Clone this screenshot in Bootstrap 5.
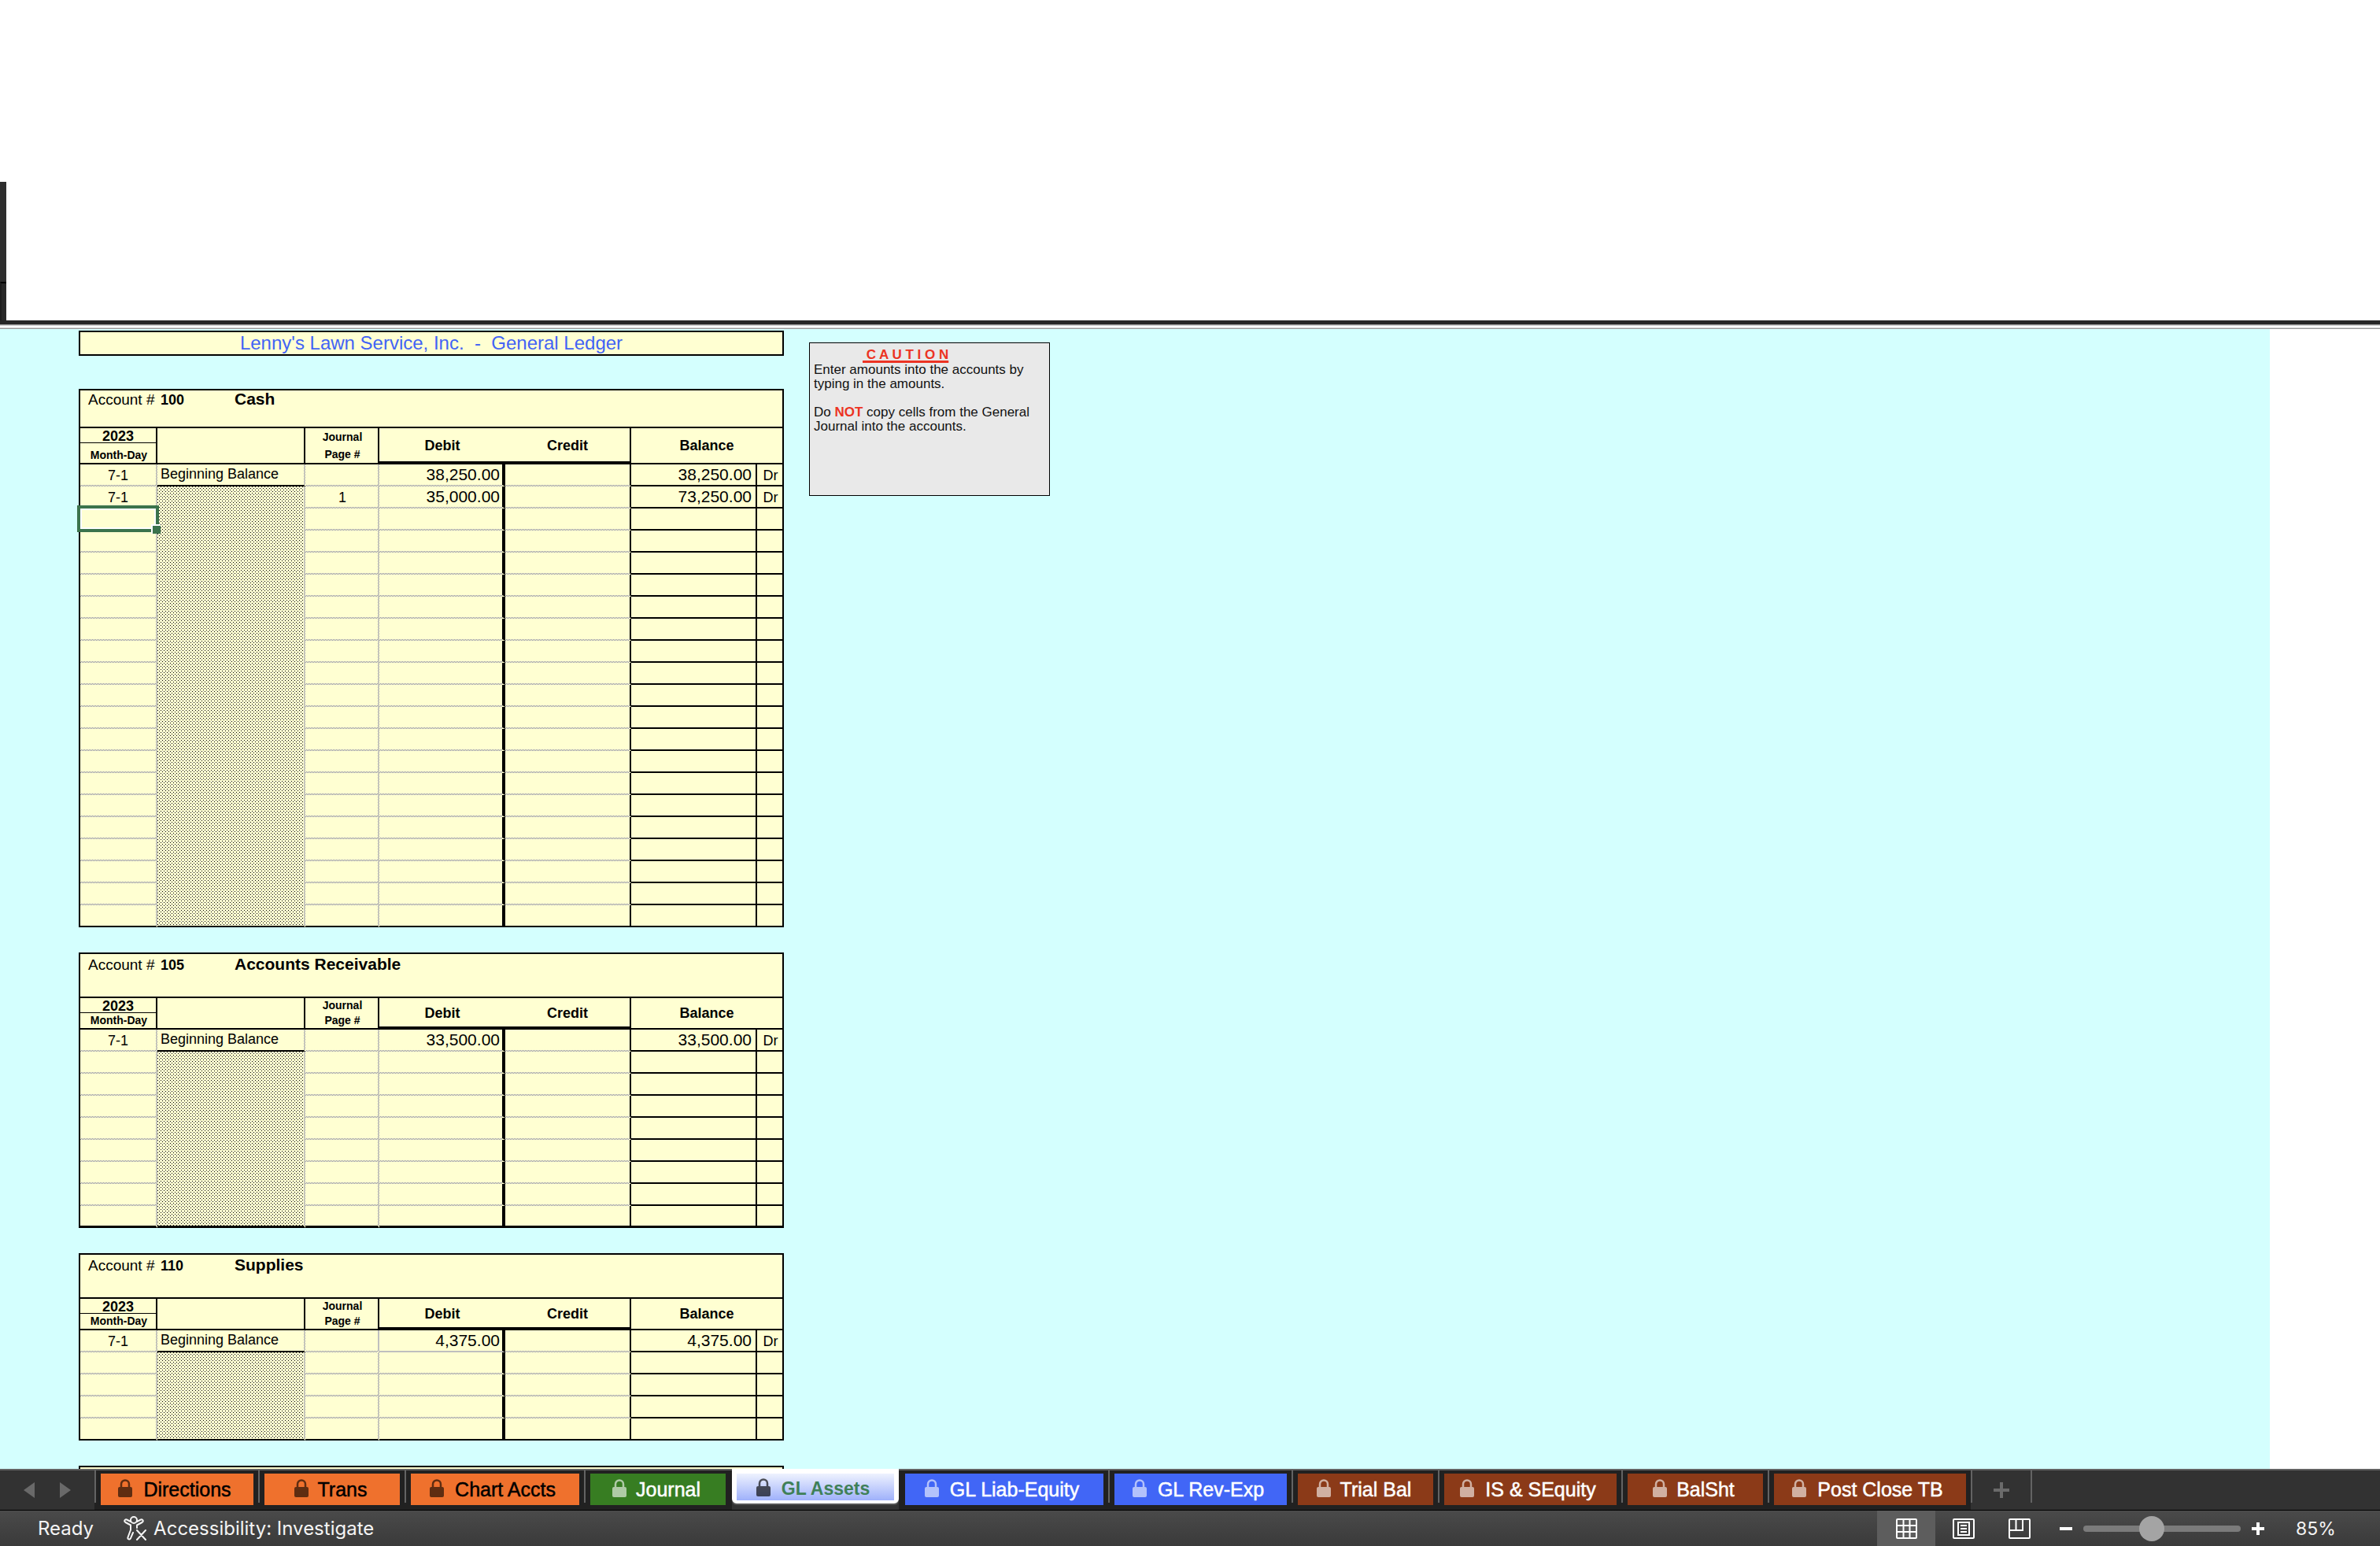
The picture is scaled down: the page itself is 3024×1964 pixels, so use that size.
<!DOCTYPE html>
<html lang="en">
<head>
<meta charset="utf-8">
<meta name="viewport" content="width=device-width, initial-scale=1">
<title>General Ledger</title>
<link href="https://cdn.jsdelivr.net/npm/bootstrap@5.3.0/dist/css/bootstrap.min.css" rel="stylesheet">
<style>
:root{--cream:#ffffd2;--sky:#d4fffe;--bar:#323232;--rule:#636363}
body{height:100vh;overflow:hidden;background:#fff;color:#000;font-family:"Liberation Sans",Arial,sans-serif;font-size:18px}
.ribbon-gap{border-bottom:5px solid #262626;padding-top:231px}
.edge-top{width:8px;height:127px;background:#2e2e2e}
.edge-low{width:8px;height:49px;background:#282828;border-top:2px solid #000;border-left:2px solid #1d1d1d}
.pane-rule{height:6px;background:linear-gradient(#999 0 1px,#d0d0d0 1px 2px,#fff 2px 4px,#d0d0d0 4px 5px,#999 5px 6px)}
.sheet{background:var(--sky);margin-right:140px;padding:2px 0 0 100px;gap:32px;min-height:0}
.ledgers{width:896px}
.ledger-title{border:2px solid #000;background:var(--cream);color:#4263f5;font-size:24px;line-height:28px;margin-bottom:42px;white-space:pre}
.acct{table-layout:fixed;width:896px;border-collapse:separate;border-spacing:0;border:solid #000;border-width:2px 0 0 2px;background:var(--cream);margin-bottom:32px}
.acct td,.acct th{padding:0;border:0 solid #000;border-right-width:2px;border-bottom-width:2px}
.c-day{width:98px}.c-item{width:188px}.c-page{width:94px}.c-amt{width:160px}.c-side{width:34px}
.acct thead td{height:56px;vertical-align:top;padding:2px 0 0 10px}
.acct.tall thead td{height:48px;padding-top:0}
.a-label{width:92px;font-size:19px;line-height:22px}
.a-num{width:94px;line-height:22px}
.a-name{font-size:21px;line-height:22px}
.acct th.yr{height:19px;line-height:16px;padding-top:2px;border-bottom-width:1px}
.acct th.md{height:21px;font-size:14px;line-height:16px;vertical-align:bottom;padding-bottom:2px;padding-left:2px}
.acct.tall th.md{height:27px}
.acct th.pg{font-size:14px;line-height:19px;padding-left:2px}
.acct.tall th.pg{line-height:22px}
.acct th.amt{line-height:24px;padding-top:1px}
.acct th.thick{border-bottom-width:4px}
.acct th.flat{border-right-width:0}
.acct th.bal{padding-bottom:2px}
/* ledger lines: dotted rules are a one-pixel checker painted under transparent borders */
.acct tbody td{height:28px;font-size:21px;line-height:26px;text-align:right;padding-right:3px}
.acct tbody td:nth-child(-n+5),.acct tbody tr:first-child td:nth-child(2){border-bottom-color:transparent;border-right-color:transparent;background:linear-gradient(var(--cream),var(--cream)) padding-box,repeating-conic-gradient(#8c8ca4 0 25%,var(--cream) 0 50%) 0 0/2px 2px border-box}
.acct tbody td:nth-child(1),.acct tbody td:nth-child(3),.acct tbody td:nth-child(7){font-size:18px;line-height:24px;padding:2px 0 0;text-align:center}
.acct tbody td:nth-child(7){padding-left:2px}
.acct tbody td:nth-child(3){padding-left:2px}
.acct tbody td:nth-child(4){border-right:4px solid #000}
.acct tbody td:nth-child(5){border-right-color:#000}
.acct tbody td:nth-child(6){padding-right:5px}
.acct tbody td:nth-child(2){border-bottom-width:0;background:conic-gradient(at 1px 1px,transparent 75%,#000 0) 0 0/4px 4px padding-box,conic-gradient(at 1px 1px,transparent 75%,#000 0) 2px 2px/4px 4px padding-box,linear-gradient(var(--cream),var(--cream)) padding-box,repeating-conic-gradient(#8c8ca4 0 25%,var(--cream) 0 50%) 0 0/2px 2px border-box}
.acct tbody tr:first-child td:nth-child(2){border-bottom:2px solid #000;font-size:18px;line-height:24px;text-align:left;vertical-align:top;padding:0 0 0 4px}
.acct tbody tr:last-child td{border-bottom:2px solid #000}
.acct.heavy tbody tr:last-child td{border-bottom-width:3px}
.acct tbody td.grey-b{border-bottom-color:#bfbfbf!important}
.acct tbody td.grey-r{border-right-color:#bfbfbf!important}
.picked{position:relative}
.picked::before{content:"";position:absolute;z-index:2;inset:-4px;border:4px solid #3b734c;box-shadow:inset 0 0 0 2px #fff}
.picked::after{content:"";position:absolute;z-index:3;right:-6px;bottom:-6px;width:12px;height:12px;background:#3b734c;border:solid #fff;border-width:2px 0 0 2px}
.notice{width:306px;height:195px;margin-top:15px;border:1px solid #000;background:#e9e9e9;padding:5px;font-size:17px;line-height:18px;color:#111}
.notice h2{font-size:17px;line-height:20px;color:#ec3323;margin:0 0 0 62px;text-decoration:underline;text-decoration-thickness:3px;text-underline-offset:2px;white-space:pre}
.notice p{margin:0 0 18px}
.notice strong{color:#ec3323}
/* sheet tabs */
.tabbar{height:53px;background:var(--bar);border-top:2px solid var(--rule);border-bottom:1px solid #000}
.nav-arrows{width:120px;padding-left:30px;gap:32px;height:50px}
.nav-arrows button,.plain{background:none;border:0;padding:0;color:inherit;display:flex;align-items:center}
.tabbar li{background:linear-gradient(var(--rule),var(--rule)) 0 0/2px 41px no-repeat #212121;padding:4px 6px 0 8px;height:50px}
.tabbar li.bare{background:#212121;padding-left:8px;padding-right:6px}
.tabbar li.on{background:var(--bar);padding:0;margin-top:-2px;height:52px}
.tabbar li.before{padding-right:8px}
.tab-face{height:40px;padding-right:6px;gap:14px;font-size:25px;line-height:40px;white-space:nowrap;text-decoration:none;color:#fff;-webkit-text-stroke:.5px}
.tab-face svg{opacity:.6;margin-bottom:3px}
.t-s{width:172px;gap:12px;padding-right:4px}.t-m{width:194px}.t-l{width:214px}.t-xl{width:219px}.t-2x{width:244px}.t-3x{width:252px}
.f-orange{background:#ef712d;color:#000}
.f-green{background:#377d22}
.f-blue{background:#4166f6}
.f-brown{background:#8b3a18}
.on .tab-face{width:212px;height:44px;border:6px solid #fff;border-bottom-width:4px;border-radius:0 0 6px 6px;background:linear-gradient(#eef2fe,#9fb1fb) padding-box,#fff;color:#3f8058;font-size:23px;font-weight:bold;-webkit-text-stroke:0;padding-top:4px;line-height:30px;box-shadow:0 2px 0 #555}
.on .tab-face svg{color:#000;opacity:.65}
.add{width:78px;height:41px;border:solid var(--rule);border-width:0 2px;color:#6b6b6b}
/* status bar */
.statusbar{height:45px;background:linear-gradient(#4a4a4a,#3a3a3a);color:#f4f4f4;font-family:Inter,"Liberation Sans",sans-serif;font-size:24px;line-height:44px;padding-left:48px}
.a11y{margin-left:38px;gap:8px}
.views button{width:74px;height:45px;justify-content:center}
.views .current{background:#5d5d5d}
.views button + button{width:71px}
.zoomer{width:200px;height:32px;margin:0 14px;appearance:none;-webkit-appearance:none;background:none}
.zoomer::-webkit-slider-runnable-track{height:8px;border-radius:4px;background:#7b7b7b}
.zoomer::-webkit-slider-thumb{-webkit-appearance:none;width:32px;height:32px;margin-top:-12px;border-radius:50%;background:#a4a4a4}
.pct{width:147px;padding-left:40px;font-size:23px}
</style>
<script src="https://cdn.jsdelivr.net/npm/bootstrap@5.3.0/dist/js/bootstrap.bundle.min.js"></script>
</head>
<body class="d-flex flex-column">
<svg class="d-none" aria-hidden="true">
  <symbol id="lock" viewBox="0 0 18 23"><path d="M4 11V6.500a5 5 0 0 1 10 0V11" fill="none" stroke="currentColor" stroke-width="2.500"/><rect y="10" width="18" height="13" rx="2" fill="currentColor"/></symbol>
</svg>

<header class="ribbon-gap flex-shrink-0"><div class="edge-top"></div><div class="edge-low"></div></header>
<div class="pane-rule flex-shrink-0"></div>

<main class="sheet d-flex align-items-start flex-grow-1 overflow-hidden">
  <div class="ledgers flex-shrink-0">
    <h1 class="ledger-title text-center fw-normal">Lenny's Lawn Service, Inc.  -  General Ledger</h1>

    <table class="acct tall">
      <colgroup><col class="c-day"><col class="c-item"><col class="c-page"><col class="c-amt"><col class="c-amt"><col class="c-amt"><col class="c-side"></colgroup>
      <thead>
        <tr><td colspan="7"><div class="d-flex align-items-baseline"><span class="a-label">Account #</span><b class="a-num">100</b><b class="a-name">Cash</b></div></td></tr>
        <tr class="text-center"><th class="yr">2023</th><th rowspan="2"></th><th class="pg" rowspan="2">Journal<br>Page #</th><th class="amt thick flat" rowspan="2">Debit</th><th class="amt thick" rowspan="2">Credit</th><th class="amt bal" rowspan="2" colspan="2">Balance</th></tr>
        <tr class="text-center"><th class="md">Month-Day</th></tr>
      </thead>
      <tbody>
        <tr><td>7-1</td><td>Beginning Balance</td><td></td><td>38,250.00</td><td></td><td>38,250.00</td><td>Dr</td></tr>
        <tr><td>7-1</td><td></td><td>1</td><td>35,000.00</td><td></td><td>73,250.00</td><td>Dr</td></tr>
        <tr><td class="picked"></td><td></td><td></td><td></td><td></td><td></td><td></td></tr>
        <tr><td></td><td></td><td></td><td></td><td></td><td></td><td></td></tr>
        <tr><td></td><td></td><td></td><td></td><td></td><td></td><td></td></tr>
        <tr><td></td><td></td><td></td><td></td><td></td><td></td><td></td></tr>
        <tr><td></td><td></td><td></td><td></td><td></td><td></td><td></td></tr>
        <tr><td></td><td></td><td></td><td></td><td></td><td></td><td></td></tr>
        <tr><td></td><td></td><td></td><td></td><td></td><td></td><td></td></tr>
        <tr><td></td><td></td><td></td><td></td><td></td><td></td><td></td></tr>
        <tr><td></td><td></td><td></td><td></td><td></td><td></td><td></td></tr>
        <tr><td></td><td></td><td></td><td></td><td></td><td></td><td></td></tr>
        <tr><td></td><td></td><td></td><td></td><td></td><td></td><td></td></tr>
        <tr><td></td><td></td><td></td><td></td><td></td><td></td><td></td></tr>
        <tr><td></td><td></td><td></td><td></td><td></td><td></td><td></td></tr>
        <tr><td></td><td></td><td></td><td></td><td></td><td></td><td></td></tr>
        <tr><td></td><td></td><td></td><td></td><td></td><td></td><td></td></tr>
        <tr><td></td><td></td><td></td><td></td><td></td><td></td><td></td></tr>
        <tr><td></td><td></td><td></td><td></td><td></td><td></td><td></td></tr>
        <tr><td></td><td></td><td></td><td></td><td></td><td></td><td></td></tr>
        <tr><td></td><td></td><td></td><td></td><td></td><td></td><td></td></tr>
      </tbody>
    </table>

    <table class="acct heavy">
      <colgroup><col class="c-day"><col class="c-item"><col class="c-page"><col class="c-amt"><col class="c-amt"><col class="c-amt"><col class="c-side"></colgroup>
      <thead>
        <tr><td colspan="7"><div class="d-flex align-items-baseline"><span class="a-label">Account #</span><b class="a-num">105</b><b class="a-name">Accounts Receivable</b></div></td></tr>
        <tr class="text-center"><th class="yr">2023</th><th rowspan="2"></th><th class="pg" rowspan="2">Journal<br>Page #</th><th class="amt thick flat" rowspan="2">Debit</th><th class="amt thick" rowspan="2">Credit</th><th class="amt bal" rowspan="2" colspan="2">Balance</th></tr>
        <tr class="text-center"><th class="md">Month-Day</th></tr>
      </thead>
      <tbody>
        <tr><td>7-1</td><td>Beginning Balance</td><td></td><td>33,500.00</td><td></td><td>33,500.00</td><td>Dr</td></tr>
        <tr><td></td><td></td><td></td><td></td><td></td><td></td><td></td></tr>
        <tr><td></td><td></td><td></td><td></td><td></td><td></td><td></td></tr>
        <tr><td></td><td></td><td></td><td></td><td></td><td></td><td></td></tr>
        <tr><td></td><td></td><td></td><td></td><td></td><td></td><td></td></tr>
        <tr><td></td><td></td><td></td><td></td><td></td><td></td><td></td></tr>
        <tr><td></td><td></td><td></td><td></td><td></td><td></td><td></td></tr>
        <tr><td></td><td></td><td></td><td></td><td></td><td></td><td></td></tr>
        <tr><td></td><td></td><td></td><td></td><td></td><td></td><td></td></tr>
      </tbody>
    </table>

    <table class="acct">
      <colgroup><col class="c-day"><col class="c-item"><col class="c-page"><col class="c-amt"><col class="c-amt"><col class="c-amt"><col class="c-side"></colgroup>
      <thead>
        <tr><td colspan="7"><div class="d-flex align-items-baseline"><span class="a-label">Account #</span><b class="a-num">110</b><b class="a-name">Supplies</b></div></td></tr>
        <tr class="text-center"><th class="yr">2023</th><th rowspan="2"></th><th class="pg" rowspan="2">Journal<br>Page #</th><th class="amt thick flat" rowspan="2">Debit</th><th class="amt thick" rowspan="2">Credit</th><th class="amt bal" rowspan="2" colspan="2">Balance</th></tr>
        <tr class="text-center"><th class="md">Month-Day</th></tr>
      </thead>
      <tbody>
        <tr><td>7-1</td><td>Beginning Balance</td><td class="grey-r"></td><td class="grey-b">4,375.00</td><td></td><td>4,375.00</td><td>Dr</td></tr>
        <tr><td></td><td></td><td></td><td></td><td></td><td></td><td></td></tr>
        <tr><td></td><td></td><td></td><td></td><td></td><td></td><td></td></tr>
        <tr><td></td><td></td><td></td><td></td><td></td><td></td><td></td></tr>
        <tr><td></td><td></td><td></td><td></td><td></td><td></td><td></td></tr>
      </tbody>
    </table>

    <table class="acct mb-0"><thead><tr><td></td></tr></thead></table>
  </div>

  <aside class="notice flex-shrink-0">
    <h2 class="fw-bold">&nbsp;C A U T I O N</h2>
    <p>Enter amounts into the accounts by typing in the amounts.</p>
    <p>Do <strong>NOT</strong> copy cells from the General Journal into the accounts.</p>
  </aside>
</main>

<nav class="tabbar d-flex flex-shrink-0" aria-label="Sheets">
  <div class="nav-arrows d-flex align-items-center">
    <button type="button" aria-label="Previous sheet"><svg width="14" height="20"><path d="M14 0v20L0 10z" fill="#696969"/></svg></button>
    <button type="button" aria-label="Next sheet"><svg width="14" height="20"><path d="M0 0v20l14-10z" fill="#696969"/></svg></button>
  </div>
  <ul class="list-unstyled d-flex m-0">
    <li><a href="#" class="tab-face t-m f-orange d-flex align-items-center justify-content-center"><svg width="18" height="23"><use href="#lock"/></svg>Directions</a></li>
    <li><a href="#" class="tab-face t-s f-orange d-flex align-items-center justify-content-center"><svg width="18" height="23"><use href="#lock"/></svg>Trans</a></li>
    <li><a href="#" class="tab-face t-l f-orange d-flex align-items-center justify-content-center"><svg width="18" height="23"><use href="#lock"/></svg>Chart Accts</a></li>
    <li class="before"><a href="#" class="tab-face t-s f-green d-flex align-items-center justify-content-center"><svg width="18" height="23"><use href="#lock"/></svg>Journal</a></li>
    <li class="on"><a href="#" class="tab-face d-flex align-items-center justify-content-center" aria-current="page"><svg width="18" height="23"><use href="#lock"/></svg>GL Assets</a></li>
    <li class="bare"><a href="#" class="tab-face t-3x f-blue d-flex align-items-center justify-content-center"><svg width="18" height="23"><use href="#lock"/></svg>GL Liab-Equity</a></li>
    <li><a href="#" class="tab-face t-xl f-blue d-flex align-items-center justify-content-center"><svg width="18" height="23"><use href="#lock"/></svg>GL Rev-Exp</a></li>
    <li><a href="#" class="tab-face t-s f-brown d-flex align-items-center justify-content-center"><svg width="18" height="23"><use href="#lock"/></svg>Trial Bal</a></li>
    <li><a href="#" class="tab-face t-xl f-brown d-flex align-items-center justify-content-center"><svg width="18" height="23"><use href="#lock"/></svg>IS &amp; SEquity</a></li>
    <li><a href="#" class="tab-face t-s f-brown d-flex align-items-center justify-content-center"><svg width="18" height="23"><use href="#lock"/></svg>BalSht</a></li>
    <li><a href="#" class="tab-face t-2x f-brown d-flex align-items-center justify-content-center"><svg width="18" height="23"><use href="#lock"/></svg>Post Close TB</a></li>
  </ul>
  <button type="button" class="plain add justify-content-center" aria-label="Add sheet"><svg width="20" height="20" class="mt-2"><path d="M10 0v20M0 10h20" stroke="currentColor" stroke-width="4"/></svg></button>
</nav>

<footer class="statusbar d-flex align-items-center flex-shrink-0">
  <span>Ready</span>
  <button type="button" class="plain a11y">
    <svg width="30" height="31" viewBox="0 0 30 31" fill="none" stroke="currentColor" stroke-width="2" stroke-linecap="round" stroke-linejoin="round"><circle cx="13" cy="5" r="4"/><path d="M9 7 4 4.500c-2-1-4 2-1.500 3.500L9 11.500v6L5.500 27c-.8 2.500 2.500 3.500 3.500 1.200L12 21M17 7l5-2.500c2-1 4 2 1.500 3.500L17 11.500V15M17 18l11 12M28 18 17 30"/></svg>
    Accessibility: Investigate
  </button>
  <div class="views d-flex ms-auto">
    <button type="button" class="plain current" aria-label="Normal view"><svg width="27" height="26" fill="none" stroke="#fff" stroke-width="2"><rect x="1" y="1" width="25" height="24" rx="1"/><path d="M9.500 1v24M17.500 1v24M1 9h25M1 17h25"/></svg></button>
    <button type="button" class="plain" aria-label="Page layout"><svg width="28" height="26" fill="none" stroke="#fff" stroke-width="2"><rect x="1" y="1" width="26" height="24" rx="1"/><path d="M7 5h14v16H7zM10 9h8M10 13h8M10 17h8"/></svg></button>
    <button type="button" class="plain" aria-label="Page break preview"><svg width="28" height="26" fill="none" stroke="#fff" stroke-width="2"><rect x="1" y="1" width="26" height="24" rx="1"/><path d="M1 15h17V1M9.500 1v14"/></svg></button>
  </div>
  <button type="button" class="plain ms-3" aria-label="Zoom out"><svg width="16" height="16"><path d="M0 8h16" stroke="#fff" stroke-width="4"/></svg></button>
  <input type="range" class="zoomer" min="0" max="200" value="85" aria-label="Zoom">
  <button type="button" class="plain" aria-label="Zoom in"><svg width="16" height="16"><path d="M0 8h16M8 0v16" stroke="#fff" stroke-width="4"/></svg></button>
  <span class="pct">85%</span>
</footer>
</body>
</html>
